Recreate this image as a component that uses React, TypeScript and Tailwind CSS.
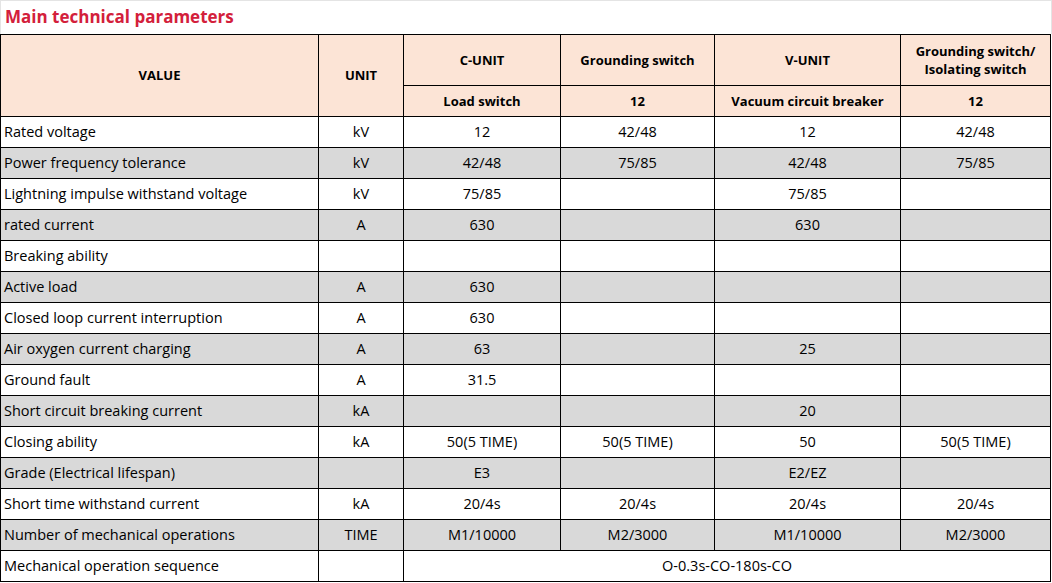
import React from "react"

type Row = {
  label: string
  unit: string
  cells: string[]
  span?: boolean
}

const rows: Row[] = [
  { label: "Rated voltage", unit: "kV", cells: ["12", "42/48", "12", "42/48"] },
  { label: "Power frequency tolerance", unit: "kV", cells: ["42/48", "75/85", "42/48", "75/85"] },
  { label: "Lightning impulse withstand voltage", unit: "kV", cells: ["75/85", "", "75/85", ""] },
  { label: "rated current", unit: "A", cells: ["630", "", "630", ""] },
  { label: "Breaking ability", unit: "", cells: ["", "", "", ""] },
  { label: "Active load", unit: "A", cells: ["630", "", "", ""] },
  { label: "Closed loop current interruption", unit: "A", cells: ["630", "", "", ""] },
  { label: "Air oxygen current charging", unit: "A", cells: ["63", "", "25", ""] },
  { label: "Ground fault", unit: "A", cells: ["31.5", "", "", ""] },
  { label: "Short circuit breaking current", unit: "kA", cells: ["", "", "20", ""] },
  { label: "Closing ability", unit: "kA", cells: ["50(5 TIME)", "50(5 TIME)", "50", "50(5 TIME)"] },
  { label: "Grade (Electrical lifespan)", unit: "", cells: ["E3", "", "E2/EZ", ""] },
  { label: "Short time withstand current", unit: "kA", cells: ["20/4s", "20/4s", "20/4s", "20/4s"] },
  { label: "Number of mechanical operations", unit: "TIME", cells: ["M1/10000", "M2/3000", "M1/10000", "M2/3000"] },
  { label: "Mechanical operation sequence", unit: "", cells: ["O-0.3s-CO-180s-CO"], span: true },
]

const th = "border border-black bg-[#fce4d6] font-bold text-[13px] text-black text-center align-middle p-0 leading-[18px]"
const td = "border border-black text-[14.5px] text-black p-0 h-[31px] align-middle"

export default function App() {
  return (
    <main className="w-[1052px] h-[583px] bg-white overflow-hidden font-['Open_Sans','Noto_Sans',sans-serif]">
      <div className="border-t border-x border-[#e4e4e4] w-[1052px]">
        <h1 className="h-[32.5px] pl-[4px] pt-[4px] text-[17px] font-bold leading-[24px] text-[#d3203b]">
          Main technical parameters
        </h1>
      </div>

      <table className="border-collapse table-fixed w-[1050px]">
        <colgroup>
          <col className="w-[318px]" />
          <col className="w-[85px]" />
          <col className="w-[157px]" />
          <col className="w-[154px]" />
          <col className="w-[186px]" />
          <col className="w-[150px]" />
        </colgroup>
        <thead>
          <tr className="h-[51px]">
            <th rowSpan={2} className={th}>VALUE</th>
            <th rowSpan={2} className={th}>UNIT</th>
            <th className={th}>C-UNIT</th>
            <th className={th}>Grounding switch</th>
            <th className={th}>V-UNIT</th>
            <th className={th}>
              Grounding switch/
              <br />
              Isolating switch
            </th>
          </tr>
          <tr className="h-[31px]">
            <th className={th}>Load switch</th>
            <th className={th}>12</th>
            <th className={th}>Vacuum circuit breaker</th>
            <th className={th}>12</th>
          </tr>
        </thead>
        <tbody>
          {rows.map((r, i) => (
            <tr key={r.label} className={i % 2 === 1 ? "bg-[#d9d9d9]" : "bg-white"}>
              <td className={`${td} pl-[3px] text-left`}>{r.label}</td>
              <td className={`${td} text-center`}>{r.unit}</td>
              {r.span ? (
                <td colSpan={4} className={`${td} text-center`}>{r.cells[0]}</td>
              ) : (
                r.cells.map((c, j) => (
                  <td key={j} className={`${td} text-center`}>{c}</td>
                ))
              )}
            </tr>
          ))}
        </tbody>
      </table>
    </main>
  )
}
